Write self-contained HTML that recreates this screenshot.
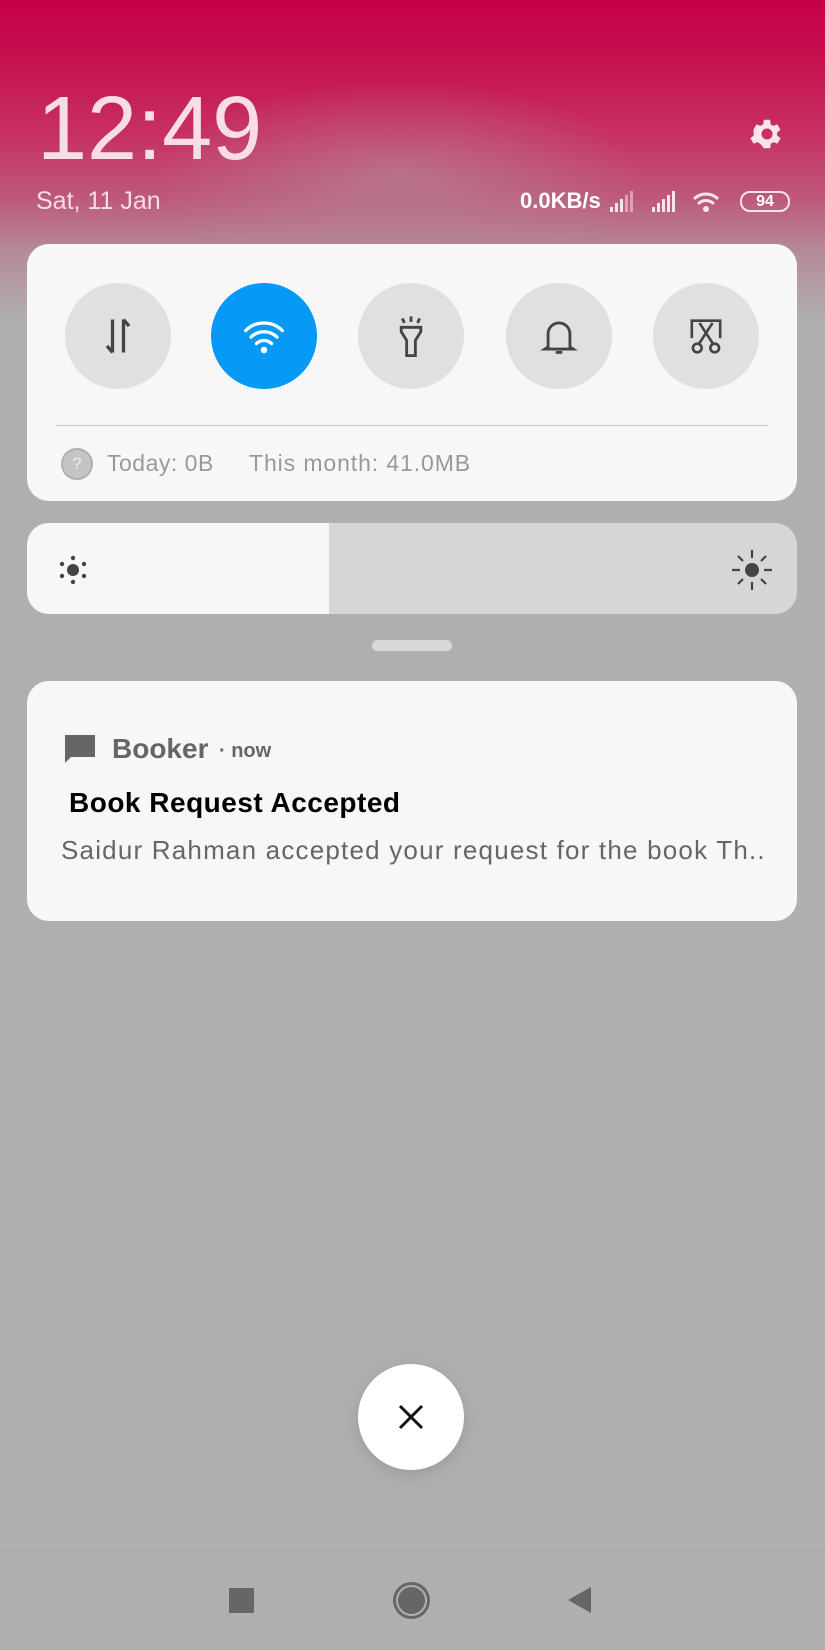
<!DOCTYPE html>
<html><head><style>
*{margin:0;padding:0;box-sizing:border-box}
body{width:825px;height:1650px;position:relative;overflow:hidden;font-family:"Liberation Sans",sans-serif;background:#afafaf}
.bg{position:absolute;left:0;top:0;width:825px;height:340px;background:linear-gradient(180deg,#c4004a 0px,#c6104f 60px,#c63366 140px,#bd5a7c 200px,#b48a98 250px,#afafaf 320px)}
.bg2{position:absolute;left:150px;top:80px;width:500px;height:200px;background:radial-gradient(ellipse at center,rgba(180,140,155,.6),rgba(180,140,155,0) 70%)}
.abs{position:absolute}
.card{position:absolute;left:27px;width:770px;background:#f7f7f7;border-radius:22px;overflow:hidden}
.circ{position:absolute;width:106px;height:106px;border-radius:50%;background:#e0e0e0;top:283px;display:flex;align-items:center;justify-content:center}
</style></head><body>
<div class="bg"></div><div class="bg2"></div>
<div class="abs" style="left:37px;top:78px;font-size:90px;color:#f8dce6;letter-spacing:0px">12:49</div>
<svg class="abs" style="left:748px;top:115px" width="38" height="38" viewBox="0 0 24 24"><path fill="#fbe3ea" d="M19.4 13a7.5 7.5 0 000-2l2.1-1.6-2-3.5-2.5 1a7 7 0 00-1.7-1L15 3h-4l-.4 2.9a7 7 0 00-1.7 1l-2.5-1-2 3.5L4.6 11a7.5 7.5 0 000 2l-2.1 1.6 2 3.5 2.5-1a7 7 0 001.7 1L11 21h4l.4-2.9a7 7 0 001.7-1l2.5 1 2-3.5zM13 15.5a3.5 3.5 0 110-7 3.5 3.5 0 010 7z" transform="translate(-1 0)"/></svg>
<div class="abs" style="left:36px;top:187px;font-size:25px;color:#f5dde5">Sat, 11 Jan</div>
<div class="abs" style="left:520px;top:188px;font-size:22px;color:#fff;font-weight:bold">0.0KB/s</div>
<svg class="abs" style="left:608px;top:189px" width="160" height="26" viewBox="0 0 160 26">
<g fill="#f6e6ec"><rect x="2" y="18" width="3" height="5"/><rect x="7" y="14" width="3" height="9"/><rect x="12" y="10" width="3" height="13"/><rect x="17" y="6" width="3" height="17" opacity=".5"/><rect x="22" y="2" width="3" height="21" opacity=".5"/>
<rect x="44" y="18" width="3" height="5"/><rect x="49" y="14" width="3" height="9"/><rect x="54" y="10" width="3" height="13"/><rect x="59" y="6" width="3" height="17"/><rect x="64" y="2" width="3" height="21"/></g>
<g fill="none" stroke="#f6e6ec" stroke-width="3" stroke-linecap="round"><path d="M87 9a17 17 0 0122 0"/><path d="M91 14a11 11 0 0114 0"/></g><circle cx="98" cy="20" r="3" fill="#f6e6ec"/></svg>
<div class="abs" style="left:740px;top:191px;width:50px;height:21px;border:2px solid #f6e6ec;border-radius:10px;font-size:16px;font-weight:bold;color:#fff;text-align:center;line-height:17px">94</div>

<div class="card" style="top:244px;height:257px"></div>
<div class="circ" style="left:65px"><svg width="44" height="44" viewBox="0 0 40 40" fill="none" stroke="#444" stroke-width="3"><path d="M15 5v30M15 35l-5-6"/><path d="M25 35V5M25 5l5 6"/></svg></div>
<div class="circ" style="left:211px;background:#0699f6"><svg width="54" height="44" viewBox="0 0 50 40" fill="none" stroke="#fff" stroke-width="3" stroke-linecap="round"><path d="M8 15a24 24 0 0134 0"/><path d="M13 21a17 17 0 0124 0"/><path d="M18 27a10 10 0 0114 0"/><circle cx="25" cy="33" r="1.5" fill="#fff"/></svg></div>
<div class="circ" style="left:358px"><svg width="44" height="48" viewBox="0 0 40 44" fill="none" stroke="#444" stroke-width="2.6"><path d="M11 14h18v4l-5 8v14h-8V26l-5-8z"/><path d="M20 4v5M12 6l2 4M28 6l-2 4"/></svg></div>
<div class="circ" style="left:506px"><svg width="44" height="48" viewBox="0 0 40 44" fill="none" stroke="#444" stroke-width="2.6"><path d="M10 32V20a10 10 0 0120 0v12l3 2H7z"/><path d="M17 37h6"/></svg></div>
<div class="circ" style="left:653px"><svg width="48" height="48" viewBox="0 0 44 44" fill="none" stroke="#444" stroke-width="2.4"><path d="M9 24V8h26v16"/><path d="M16 10l13 20M28 10L15 30"/><circle cx="14" cy="33" r="4"/><circle cx="30" cy="33" r="4"/></svg></div>
<div class="abs" style="left:56px;top:425px;width:712px;height:1px;background:#c8c8c8"></div>
<div class="abs" style="left:61px;top:448px;width:32px;height:32px;border-radius:50%;background:#c4c4c4;border:2px solid #b0b0b0;color:#eee;font-size:17px;text-align:center;line-height:28px">?</div>
<div class="abs" style="left:107px;top:450px;font-size:23px;color:#999;letter-spacing:.5px">Today: 0B</div>
<div class="abs" style="left:249px;top:450px;font-size:23px;color:#999;letter-spacing:.9px">This month: 41.0MB</div>

<div class="card" style="top:523px;height:91px;background:#d6d6d6"><div style="width:302px;height:91px;background:#f7f7f7"></div></div>
<svg class="abs" style="left:55px;top:552px" width="36" height="36" viewBox="0 0 36 36" fill="#444"><circle cx="18" cy="18" r="6"/><circle cx="18" cy="6" r="2.2"/><circle cx="18" cy="30" r="2.2"/><circle cx="7" cy="12" r="2.2"/><circle cx="29" cy="12" r="2.2"/><circle cx="7" cy="24" r="2.2"/><circle cx="29" cy="24" r="2.2"/></svg>
<svg class="abs" style="left:730px;top:548px" width="44" height="44" viewBox="0 0 44 44"><circle cx="22" cy="22" r="7" fill="#444"/><g stroke="#444" stroke-width="2.2"><path d="M22 2v8M22 34v8M2 22h8M34 22h8M8 8l5 5M31 31l5 5M36 8l-5 5M13 31l-5 5"/></g></svg>
<div class="abs" style="left:372px;top:640px;width:80px;height:11px;border-radius:6px;background:#d8d8d8"></div>

<div class="card" style="top:681px;height:240px"></div>
<svg class="abs" style="left:63px;top:733px" width="34" height="34" viewBox="0 0 34 34"><path fill="#666" d="M2 2h30v22H8l-6 6z"/></svg>
<div class="abs" style="left:112px;top:733px;font-size:28px;font-weight:bold;color:#666">Booker</div>
<div class="abs" style="left:219px;top:740px;font-size:20px;font-weight:bold;color:#666">· now</div>
<div class="abs" style="left:69px;top:787px;font-size:28px;font-weight:bold;color:#000;letter-spacing:.5px">Book Request Accepted</div>
<div class="abs" style="left:61px;top:835px;font-size:26px;color:#666;letter-spacing:1.2px">Saidur Rahman accepted your request for the book Th..</div>

<div class="abs" style="left:358px;top:1364px;width:106px;height:106px;border-radius:50%;background:#fff;box-shadow:0 4px 14px rgba(0,0,0,.12)"></div>
<svg class="abs" style="left:396px;top:1402px" width="30" height="30" viewBox="0 0 30 30" stroke="#111" stroke-width="3"><path d="M4 4l22 22M26 4L4 26"/></svg>

<div class="abs" style="left:0;top:1550px;width:825px;height:1px;background:#a6a6a6"></div>
<div class="abs" style="left:229px;top:1588px;width:25px;height:25px;background:#666"></div>
<div class="abs" style="left:393px;top:1582px;width:37px;height:37px;border-radius:50%;border:3px solid #666"></div>
<div class="abs" style="left:398px;top:1587px;width:27px;height:27px;border-radius:50%;background:#666"></div>
<svg class="abs" style="left:567px;top:1586px" width="26" height="28" viewBox="0 0 26 28"><path d="M24 1v26L1 14z" fill="#666"/></svg>
</body></html>
